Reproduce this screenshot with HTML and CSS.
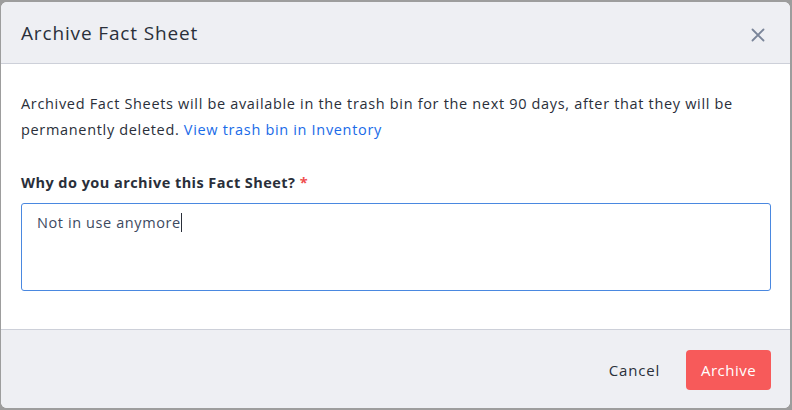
FILE: index.html
```html
<!DOCTYPE html>
<html>
<head>
<meta charset="utf-8">
<link rel="stylesheet" href="styles.css">
</head>
<body>
<div class="backdrop">
  <div class="modal">
    <div class="header">
      <h1 class="title">Archive Fact Sheet</h1>
      <button class="close" aria-label="Close">
        <svg width="14" height="14" viewBox="0 0 14 14"><path d="M1.5 1.5 L12.5 12.5 M12.5 1.5 L1.5 12.5" stroke="#7a8599" stroke-width="1.8" stroke-linecap="round"/></svg>
      </button>
    </div>
    <div class="body">
      <p class="info">Archived Fact Sheets will be available in the trash bin for the next 90 days, after that they will be permanently deleted. <a class="link" href="#">View trash bin in Inventory</a></p>
      <label class="label">Why do you archive this Fact Sheet? <span class="req">*</span></label>
      <div class="textarea"><span class="value">Not in use anymore</span><span class="caret"></span></div>
    </div>
    <div class="footer">
      <button class="btn-cancel">Cancel</button>
      <button class="btn-archive">Archive</button>
    </div>
  </div>
</div>
</body>
</html>
```
FILE: styles.css
```css
html, body {
  margin: 0;
  padding: 0;
}
body {
  width: 792px;
  height: 410px;
  background: #9d9d9d;
  font-family: "Open Sans", sans-serif;
  overflow: hidden;
}
.backdrop {
  padding: 2px 2px 2px 1px;
  height: 406px;
}
.modal {
  height: 406px;
  background: #fff;
  border-radius: 6px;
  overflow: hidden;
  display: flex;
  flex-direction: column;
}
.header {
  flex: none;
  height: 62px;
  background: #eeeff3;
  border-bottom: 1px solid #cdd0d9;
  display: flex;
  align-items: center;
  justify-content: space-between;
  padding: 0 20px;
  box-sizing: border-box;
}
.title {
  margin: 0;
  font-size: 19px;
  font-weight: 500;
  letter-spacing: 0.85px;
  color: #2a2f3a;
}
.close {
  background: none;
  border: 0;
  padding: 0;
  width: 14px;
  height: 14px;
  margin-right: 5px;
  margin-top: 4px;
  display: flex;
}
.body {
  flex: 1;
  padding: 27px 19px 0 20px;
}
.info {
  margin: 0;
  font-size: 14.5px;
  letter-spacing: 0.67px;
  line-height: 26px;
  color: #2a2f3a;
}
.link {
  color: #1a6be8;
  text-decoration: none;
}
.label {
  display: block;
  margin-top: 30px;
  font-size: 14.5px;
  letter-spacing: 0.45px;
  font-weight: 700;
  color: #2a2f3a;
  line-height: 20px;
}
.req {
  color: #f04f4f;
}
.textarea {
  margin-top: 10px;
  height: 88px;
  border: 1px solid #4a88e0;
  border-radius: 3px;
  padding: 9px 15px;
  box-sizing: border-box;
  font-size: 14.5px;
  letter-spacing: 0.6px;
  color: #3d4a5f;
  display: flex;
  align-items: flex-start;
}
.caret {
  display: inline-block;
  width: 1px;
  height: 19px;
  background: #2a2f3a;
}
.footer {
  flex: none;
  height: 79px;
  background: #eeeff3;
  border-top: 1px solid #cdd0d9;
  box-sizing: border-box;
  display: flex;
  align-items: center;
  justify-content: flex-end;
  padding: 2px 19px 0 0;
  gap: 26px;
}
.btn-cancel {
  background: none;
  border: 0;
  font-family: inherit;
  font-size: 15px;
  letter-spacing: 0.8px;
  color: #2a2f3a;
  padding: 0;
}
.btn-archive {
  background: #f75a5a;
  border: 0;
  border-radius: 4px;
  color: #fff;
  font-family: inherit;
  font-size: 15px;
  letter-spacing: 0.5px;
  width: 85px;
  height: 40px;
  padding: 0;
}
```
